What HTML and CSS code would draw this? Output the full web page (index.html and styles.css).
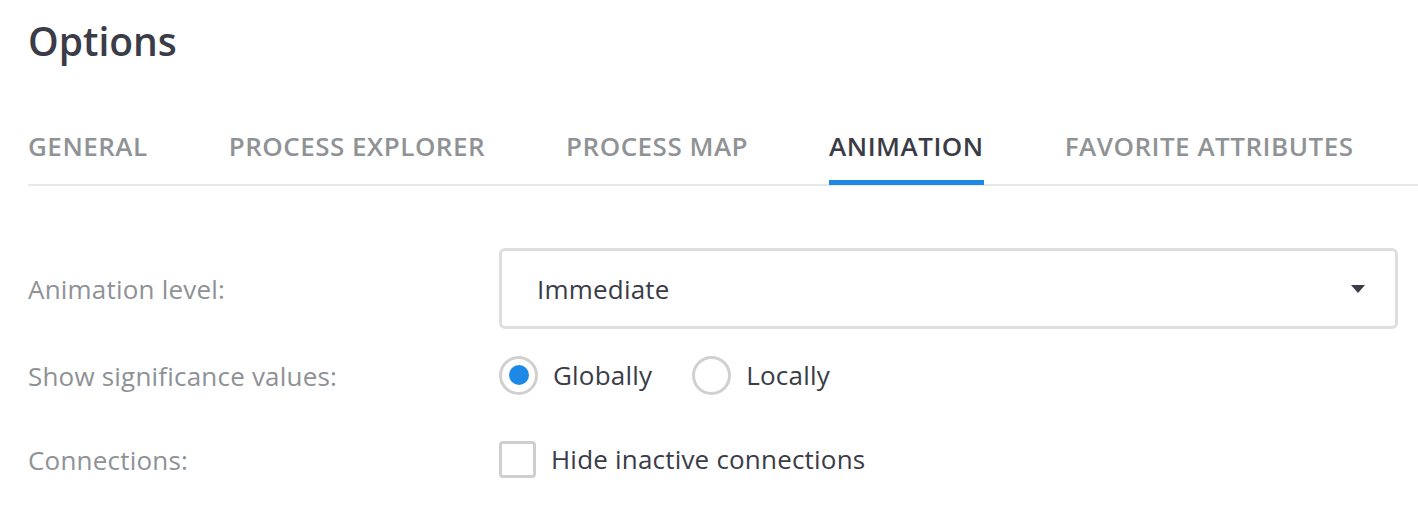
FILE: index.html
```html
<!DOCTYPE html>
<html>
<head>
<meta charset="utf-8">
<link rel="stylesheet" href="styles.css">
</head>
<body>
<div class="page">
  <h1 class="title">Options</h1>
  <nav class="tabs">
    <div class="tab">GENERAL</div>
    <div class="tab">PROCESS EXPLORER</div>
    <div class="tab">PROCESS MAP</div>
    <div class="tab active">ANIMATION</div>
    <div class="tab">FAVORITE ATTRIBUTES</div>
  </nav>
  <div class="form">
    <div class="label">Animation level:</div>
    <div class="control">
      <div class="select">
        <span class="select-value">Immediate</span>
        <svg class="caret" width="14" height="8" viewBox="0 0 14 8"><path d="M0 0 L14 0 L7 8 Z" fill="#3a3c47"/></svg>
      </div>
    </div>
    <div class="label">Show significance values:</div>
    <div class="control radios">
      <label class="radio"><span class="radio-circle checked"></span><span>Globally</span></label>
      <label class="radio"><span class="radio-circle"></span><span>Locally</span></label>
    </div>
    <div class="label">Connections:</div>
    <div class="control">
      <label class="checkbox"><span class="box"></span><span>Hide inactive connections</span></label>
    </div>
  </div>
</div>
</body>
</html>
```
FILE: styles.css
```css
html, body {
  margin: 0;
  padding: 0;
  background: #ffffff;
}
body {
  font-family: "Open Sans", "Noto Sans", sans-serif;
  color: #3a3c47;
}
.page {
  padding: 0 0 0 28px;
}
.title {
  margin: 0;
  padding-top: 16px;
  font-size: 39px;
  font-weight: 600;
  line-height: 50px;
  color: #3a3c47;
}
.tabs {
  display: flex;
  gap: 81px;
  margin-top: 63px;
  border-bottom: 2px solid #e8e8e8;
}
.tab {
  font-size: 26px;
  letter-spacing: 0.5px;
  font-weight: 600;
  color: #909396;
  line-height: 34px;
  padding-bottom: 17px;
  border-bottom: 5px solid transparent;
  margin-bottom: -1px;
}
.tab.active {
  color: #3a3c47;
  border-bottom-color: #1e88e5;
}
.form {
  display: grid;
  grid-template-columns: 471px 1fr;
  grid-template-rows: 81px 92px 76px;
  margin-top: 62px;
  padding-right: 20px;
}
.label {
  display: flex;
  align-items: center;
  font-size: 26px;
  letter-spacing: 0.2px;
  color: #8e9296;
  padding-top: 1px;
}
.control {
  display: flex;
  align-items: center;
  font-size: 26px;
  letter-spacing: 0.2px;
  color: #3a3c47;
}
.select {
  box-sizing: border-box;
  width: 100%;
  height: 81px;
  border: 3px solid #dedede;
  border-radius: 6px;
  display: flex;
  align-items: center;
  justify-content: space-between;
  padding: 0 30px 0 35px;
}
.radios {
  gap: 40px;
}
.radio {
  display: flex;
  align-items: center;
  gap: 15px;
}
.radio-circle {
  box-sizing: border-box;
  width: 39px;
  height: 39px;
  border: 3px solid #d0d0d0;
  border-radius: 50%;
  display: flex;
  align-items: center;
  justify-content: center;
}
.radio-circle.checked::after {
  content: "";
  width: 20px;
  height: 20px;
  border-radius: 50%;
  background: #1e88e5;
}
.checkbox {
  display: flex;
  align-items: center;
  gap: 15px;
}
.box {
  box-sizing: border-box;
  width: 37px;
  height: 37px;
  border: 3px solid #cfcfcf;
  border-radius: 4px;
}
```
